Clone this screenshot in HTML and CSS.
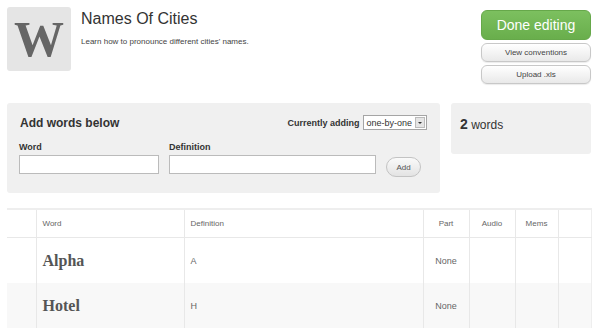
FILE: index.html
```html
<!DOCTYPE html>
<html lang="en">
<head>
  <meta charset="UTF-8">
  <title>Names Of Cities | Edit</title>
  <link rel="stylesheet" href="styles.css">
</head>
<body>
  <div class="page">
    <header class="course-head">
      <div class="course-logo">W</div>
      <div class="course-info">
        <h1>Names Of Cities</h1>
        <p>Learn how to pronounce different cities' names.</p>
      </div>
      <div class="course-actions">
        <button class="btn-done">Done editing</button>
        <button class="btn-small">View conventions</button>
        <button class="btn-small">Upload .xls</button>
      </div>
    </header>

    <div class="panels">
      <div class="add-panel">
        <div class="add-top">
          <h2>Add words below</h2>
          <div class="adding-mode">
            <span>Currently adding</span>
            <div class="fake-select">
              <span class="sel-value">one-by-one</span>
              <span class="sel-arrow"></span>
            </div>
          </div>
        </div>
        <div class="add-fields">
          <div class="field word-field">
            <label>Word</label>
            <input type="text">
          </div>
          <div class="field def-field">
            <label>Definition</label>
            <input type="text">
          </div>
          <button class="btn-add">Add</button>
        </div>
      </div>
      <div class="count-panel">
        <b>2</b> words
      </div>
    </div>

    <table class="words">
      <colgroup>
        <col class="c-num">
        <col class="c-word">
        <col class="c-def">
        <col class="c-part">
        <col class="c-audio">
        <col class="c-mems">
        <col class="c-end">
      </colgroup>
      <thead>
        <tr>
          <th></th>
          <th>Word</th>
          <th>Definition</th>
          <th class="mid">Part</th>
          <th class="mid">Audio</th>
          <th class="mid">Mems</th>
          <th></th>
        </tr>
      </thead>
      <tbody>
        <tr>
          <td></td>
          <td class="word">Alpha</td>
          <td>A</td>
          <td class="mid">None</td>
          <td></td>
          <td></td>
          <td></td>
        </tr>
        <tr class="alt">
          <td></td>
          <td class="word">Hotel</td>
          <td>H</td>
          <td class="mid">None</td>
          <td></td>
          <td></td>
          <td></td>
        </tr>
      </tbody>
    </table>
  </div>
</body>
</html>
```

FILE: styles.css
```css
body {
  margin: 0;
  background: #fff;
  font-family: 'Liberation Sans', Arial, sans-serif;
  color: #333;
}
.page {
  padding: 7px 9px 0 7px;
}
.course-head {
  display: flex;
  align-items: flex-start;
}
.course-logo {
  width: 64px;
  height: 64px;
  background: #e5e5e5;
  border-radius: 3px;
  color: #666;
  font-family: 'Liberation Serif', 'Times New Roman', serif;
  font-weight: bold;
  font-size: 50px;
  line-height: 64px;
  text-align: center;
  flex: none;
}
.course-info {
  flex: 1;
  padding-left: 10px;
}
.course-info h1 {
  margin: 3px 0 0;
  font-size: 16px;
  font-weight: normal;
  color: #333;
}
.course-info p {
  margin: 9px 0 0;
  font-size: 8px;
  color: #444;
}
.course-actions {
  width: 110px;
  display: flex;
  flex-direction: column;
  gap: 3px;
  padding-top: 3px;
}
.course-actions button {
  font-family: inherit;
  cursor: pointer;
}
.btn-done {
  height: 30px;
  background: linear-gradient(#7cc05f, #69ae4c);
  border: 1px solid #66a84a;
  border-radius: 6px;
  color: #fff;
  font-size: 14px;
  padding: 0;
}
.btn-small {
  height: 19px;
  background: linear-gradient(#fff, #e9e9e9);
  border: 1px solid #c8c8c8;
  border-radius: 6px;
  color: #444;
  font-size: 8px;
  padding: 0;
  box-shadow: 0 1px 1px rgba(0, 0, 0, 0.08);
}

.panels {
  display: flex;
  gap: 11px;
  margin-top: 19px;
}
.add-panel {
  width: 433px;
  height: 90px;
  box-sizing: border-box;
  background: #f0f0f0;
  border-radius: 3px;
  padding: 12px 13px 0 12px;
}
.add-top {
  display: flex;
  justify-content: space-between;
  align-items: center;
}
.add-top h2 {
  margin: 0 0 0 1px;
  font-size: 12px;
  color: #333;
}
.adding-mode {
  display: flex;
  align-items: center;
  gap: 4px;
  font-size: 9px;
  font-weight: bold;
  color: #333;
}
.fake-select {
  display: flex;
  align-items: center;
  height: 13px;
  border: 1px solid #a5a5a5;
  background: #fff;
  font-weight: normal;
  font-size: 9px;
  padding-left: 2px;
}
.sel-value {
  padding-right: 3px;
}
.sel-arrow {
  width: 10px;
  height: 11px;
  margin-right: 1px;
  background: #e5e5e5;
  border: 1px solid #bbb;
  box-sizing: border-box;
  position: relative;
}
.sel-arrow::after {
  content: '';
  position: absolute;
  left: 2px;
  top: 4px;
  border-left: 2px solid transparent;
  border-right: 2px solid transparent;
  border-top: 2px solid #333;
}
.add-fields {
  display: flex;
  align-items: flex-end;
  margin-top: 12px;
}
.field label {
  display: block;
  font-size: 9px;
  font-weight: bold;
  color: #333;
  margin-bottom: 3px;
}
.field input {
  display: block;
  box-sizing: border-box;
  height: 19px;
  border: 1px solid #bbb;
  background: #fff;
  margin: 0;
}
.word-field input {
  width: 140px;
}
.def-field {
  margin-left: 10px;
}
.def-field input {
  width: 207px;
}
.btn-add {
  margin-left: 10px;
  margin-bottom: -3px;
  width: 35px;
  height: 20px;
  border-radius: 10px;
  border: 1px solid #c3c3c3;
  background: linear-gradient(#fafafa, #e3e3e3);
  font-family: inherit;
  font-size: 8px;
  color: #555;
  padding: 0;
}
.count-panel {
  width: 140px;
  height: 51px;
  box-sizing: border-box;
  background: #f0f0f0;
  border-radius: 3px;
  padding: 13px 9px;
  font-size: 12px;
  color: #333;
}
.count-panel b {
  font-size: 14px;
}

.words {
  margin-top: 15px;
  width: 584px;
  table-layout: fixed;
  border-collapse: collapse;
  border-top: 2px solid #eee;
  border-right: 1px solid #eee;
  font-size: 8px;
  color: #666;
}
.c-num { width: 29px; }
.c-word { width: 148px; }
.c-def { width: 239px; }
.c-part { width: 46px; }
.c-audio { width: 46px; }
.c-mems { width: 43px; }
.c-end { width: 33px; }
.words th {
  height: 27px;
  font-weight: normal;
  text-align: left;
  padding: 0 0 0 6px;
  color: #666;
  border-bottom: 1px solid #e8e8e8;
}
.words th, .words td {
  border-left: 1px solid #e8e8e8;
}
.words th:first-child, .words td:first-child {
  border-left: none;
}
.words td {
  height: 45px;
  padding: 0 0 0 6px;
  font-size: 9px;
  color: #666;
}
.words .alt td {
  background: #f8f8f8;
}
.words .mid {
  text-align: center;
  padding: 0;
}
.words td.word {
  font-family: 'Liberation Serif', 'Times New Roman', serif;
  font-weight: bold;
  font-size: 16px;
  color: #555;
}
```
